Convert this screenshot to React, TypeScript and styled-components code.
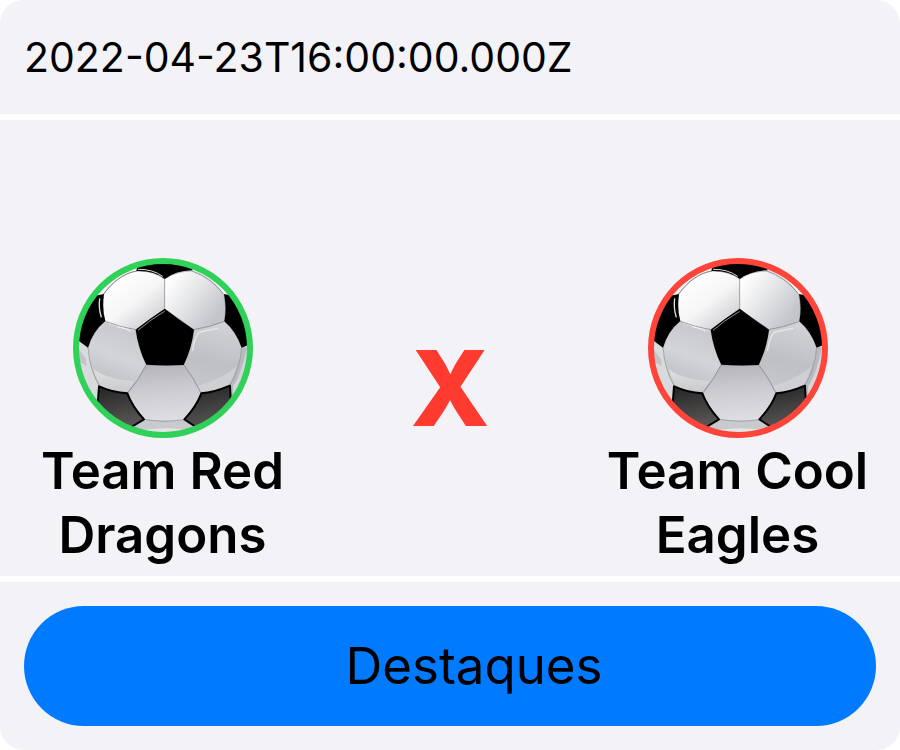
import React, { useId } from "react";
import styled, { createGlobalStyle } from "styled-components";

const GlobalStyle = createGlobalStyle`
  * { box-sizing: border-box; }
  body {
    margin: 0;
    background: #ffffff;
    color: #000000;
    font-family: Inter, "Liberation Sans", sans-serif;
  }
`;

const Card = styled.article`
  display: flex;
  flex-direction: column;
  gap: 6px;
  overflow: hidden;
  border-radius: 24px;
  background: #ffffff;
`;

const Section = styled.section`
  padding: 24px;
  background: #f2f2f7;
`;

const Header = styled(Section).attrs({ as: "header" })`
  padding: 32px 24px;
`;

const Kickoff = styled.time`
  display: block;
  font-size: 41px;
  line-height: 50px;
`;

const Match = styled(Section)`
  display: grid;
  grid-template-columns: minmax(0, 1fr) 298px minmax(0, 1fr);
  padding: 138px 24px 9px;
`;

const Team = styled.div`
  display: flex;
  flex-direction: column;
  align-items: center;
  gap: 1px;
`;

const TeamName = styled.h2`
  margin: 0;
  font-size: 51px;
  font-weight: 600;
  line-height: 64px;
  text-align: center;
`;

const Versus = styled.span`
  padding-top: 80px;
  color: #ff3b30;
  font-size: 104px;
  font-weight: 800;
  line-height: 100px;
  text-align: center;
`;

const Badge = styled.svg`
  display: block;
  width: 180px;
  height: 180px;
`;

const Highlights = styled.button`
  display: block;
  width: 100%;
  padding: 28px 0 28px 48px;
  border: 0;
  border-radius: 60px;
  background: #007aff;
  color: #000000;
  font: inherit;
  font-size: 51px;
  line-height: 64px;
  text-align: center;
  cursor: pointer;
`;

function SoccerBall({ ring }: { ring: string }) {
  const id = useId().replace(/[^a-zA-Z0-9]/g, "");
  const url = (name: string) => `url(#${id}${name})`;
  return (
    <Badge viewBox="27 24 540 540" aria-hidden="true">
      <defs>
        <clipPath id={id + "clip"}><circle cx="297" cy="294" r="264" /></clipPath>
        <linearGradient id={id + "topL"} x1="0.15" y1="0.1" x2="0.85" y2="0.95">
          <stop offset="0" stopColor="#ffffff" />
          <stop offset="0.5" stopColor="#f6f6f7" />
          <stop offset="1" stopColor="#cbccd0" />
        </linearGradient>
        <linearGradient id={id + "topR"} x1="0.1" y1="0.1" x2="0.9" y2="0.7">
          <stop offset="0" stopColor="#ffffff" />
          <stop offset="0.45" stopColor="#e6e7e9" />
          <stop offset="1" stopColor="#c4c5c9" />
        </linearGradient>
        <linearGradient id={id + "left"} x1="0.7" y1="0" x2="0.4" y2="1">
          <stop offset="0" stopColor="#c5c6ca" />
          <stop offset="0.5" stopColor="#d3d4d7" />
          <stop offset="1" stopColor="#bbbcc0" />
        </linearGradient>
        <linearGradient id={id + "right"} x1="0.6" y1="0" x2="0.4" y2="1">
          <stop offset="0" stopColor="#d2d3d6" />
          <stop offset="0.55" stopColor="#bfc0c4" />
          <stop offset="1" stopColor="#c6c7cb" />
        </linearGradient>
        <linearGradient id={id + "low"} x1="0.4" y1="0" x2="0.5" y2="1">
          <stop offset="0" stopColor="#b5b6ba" />
          <stop offset="0.5" stopColor="#ceced2" />
          <stop offset="1" stopColor="#dedfe2" />
        </linearGradient>
        <linearGradient id={id + "shine"} x1="0" y1="0" x2="0" y2="1">
          <stop offset="0" stopColor="#dfe0e2" />
          <stop offset="1" stopColor="#c8c9cc" />
        </linearGradient>
        <linearGradient id={id + "dark"} x1="0.2" y1="0" x2="0.4" y2="1">
          <stop offset="0" stopColor="#252525" />
          <stop offset="1" stopColor="#5c5858" />
        </linearGradient>
        <linearGradient id={id + "rim"} x1="0" y1="0" x2="0" y2="1">
          <stop offset="0" stopColor="#ffffff" />
          <stop offset="0.5" stopColor="#e3e3e6" />
          <stop offset="1" stopColor="#a9aaae" />
        </linearGradient>
      </defs>
      <g clipPath={url("clip")}>
        <rect x="27" y="24" width="540" height="540" fill={url("rim")} />
        <path d="M30 260L72 292Q76 355 105 407L103 475L30 430Z" fill="#d9dadd" />
        <path d="M42 296L66 326L68 348L46 336Z" fill="#c3c4c8" />
        <path d="M533 292Q528 355 498 405L500 460L560 370V292Z" fill="#b9babe" />
        <path d="M548 294Q536 365 507 410L508 450L565 340Z" fill="#d5d6d9" />
        <path d="M205 527L241 508Q300 520 359 509L390 530L300 560Z" fill="#c9cacd" />
        <path d="M220 542Q300 528 377 540L300 565Z" fill="#e3e4e6" />

        <g stroke="#77787c" strokeWidth="1.5" strokeLinejoin="round">
          <path d="M119 132C145 97 178 69 219 63Q267 62 302 87V177L215 239Q160 232 122 213Q114 178 119 132Z" fill={url("topL")} />
          <path d="M302 87Q337 63 385 63C421 72 457 101 480 134Q489 174 482 214Q436 232 390 239L302 177Z" fill={url("topR")} />
          <path d="M122 213Q168 231 215 239Q224 295 247 344Q224 390 191 430Q144 428 105 407Q76 355 72 292Q87 243 122 213Z" fill={url("left")} />
          <path d="M390 239Q440 231 482 214Q516 244 533 292Q528 355 498 405Q451 427 411 430Q392 388 359 344Q382 294 390 239Z" fill={url("right")} />
          <path d="M247 344Q303 348 359 344Q391 387 411 430Q394 474 359 509Q300 518 241 508Q204 467 191 430Q225 389 247 344Z" fill={url("low")} />
        </g>

        <path d="M89 358C119 380 157 389 212 394L190 427Q144 424 107 404Q95 384 89 358Z" fill={url("shine")} />
        <path d="M402 407Q466 391 517 350Q509 380 496 401Q453 423 412 426Z" fill="#cfd0d3" />
        <path d="M132 220Q170 236 214 242" fill="none" stroke="#dcdde0" strokeWidth="3" />
        <path d="M160 230Q190 235 200 246" fill="none" stroke="#f5f5f6" strokeWidth="3" />
        <path d="M385 303Q393 257 406 247Q432 239 462 235" fill="none" stroke="#e7e8ea" strokeWidth="4" />
        <path d="M388 60Q443 79 482 130" fill="none" stroke="#fafafa" strokeWidth="3" />
        <path d="M383 63Q438 82 477 130" fill="none" stroke="#85868a" strokeWidth="2" />
        <path d="M119 132C145 97 178 69 219 63" fill="none" stroke="#696a6d" strokeWidth="2" />

        <path d="M217 63L224 30H376L386 61Q336 62 302 87Q270 61 217 63Z" fill="#000" />
        <path d="M222 58Q266 57 296 79" fill="none" stroke="#d8d8da" strokeWidth="3" />
        <path d="M120 132Q113 176 124 213Q86 244 72 293L30 262L50 160L90 138Z" fill="#000" />
        <path d="M107 145Q103 173 112 202" fill="none" stroke="#dedee0" strokeWidth="4" />
        <path d="M480 132Q489 174 481 214Q516 244 533 293L565 280L550 175L510 138Z" fill="#000" />
        <path d="M302 176Q346 209 390 239Q383 296 359 345Q303 348 247 344Q223 296 215 239Q258 205 302 176Z" fill="#000" />
        <path d="M222 241Q260 208 302 184" fill="none" stroke="#929294" strokeWidth="3" />

        <path d="M105 409Q144 427 190 430Q204 469 240 508L190 538L90 530L102 450Z" fill={url("dark")} stroke="#000" strokeWidth="6" strokeLinejoin="round" />
        <path d="M498 407Q451 427 412 430Q397 470 361 508L410 540L510 530L500 446Z" fill={url("dark")} stroke="#000" strokeWidth="6" strokeLinejoin="round" />
      </g>
      <circle cx="297" cy="294" r="261" fill="none" stroke={ring} strokeWidth="18" />
    </Badge>
  );
}

const teams = [
  { name: "Team Red Dragons", ring: "#30d158" },
  { name: "Team Cool Eagles", ring: "#ff453a" },
];

function TeamBlock({ name, ring }: { name: string; ring: string }) {
  return (
    <Team>
      <SoccerBall ring={ring} />
      <TeamName>{name}</TeamName>
    </Team>
  );
}

export default function App() {
  return (
    <>
      <GlobalStyle />
      <Card>
        <Header>
          <Kickoff dateTime="2022-04-23T16:00:00.000Z">2022-04-23T16:00:00.000Z</Kickoff>
        </Header>
        <Match>
          <TeamBlock {...teams[0]} />
          <Versus>X</Versus>
          <TeamBlock {...teams[1]} />
        </Match>
        <Section>
          <Highlights type="button">Destaques</Highlights>
        </Section>
      </Card>
    </>
  );
}
